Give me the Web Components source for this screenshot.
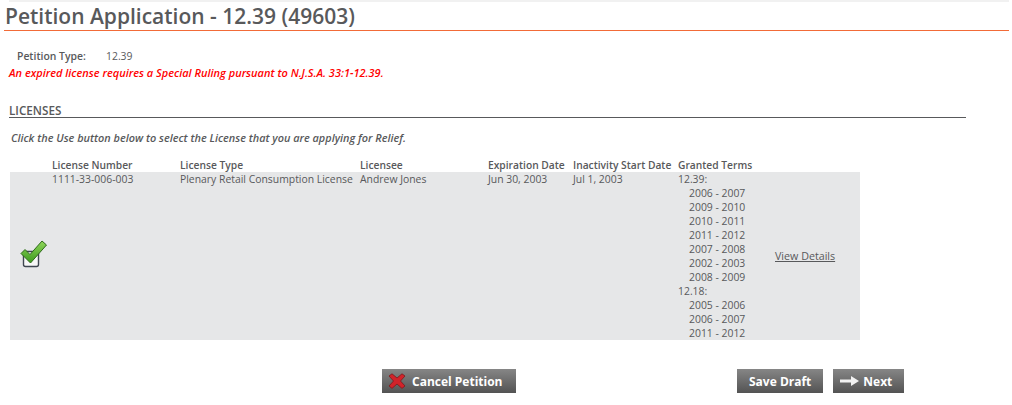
<!DOCTYPE html>
<html>
<head>
<meta charset="utf-8">
<title>Petition Application</title>
<style>
  html, body { margin: 0; padding: 0; background: #fff; }
  body { font-family: "Open Sans", "Noto Sans", sans-serif; color: #58595b; }
</style>
</head>
<body>
<petition-page>
  <page-title>Petition Application - 12.39 (49603)</page-title>
  <petition-info type="12.39">An expired license requires a Special Ruling pursuant to N.J.S.A. 33:1-12.39.</petition-info>
  <license-section heading="LICENSES" hint="Click the Use button below to select the License that you are applying for Relief."></license-section>
  <action-bar>
    <action-button slot="left" icon="cross">Cancel Petition</action-button>
    <action-button slot="right">Save Draft</action-button>
    <action-button slot="right" icon="arrow">Next</action-button>
  </action-bar>
</petition-page>

<script>
class PetitionPage extends HTMLElement {
  constructor() {
    super();
    this.attachShadow({ mode: 'open' });
    this.shadowRoot.innerHTML = `
      <style>
        :host { display: block; width: 1012px; height: 405px; overflow: hidden; }
        .topline { height: 2px; margin: 0 3px 0 9px; background: #f1f1f1; }
      </style>
      <div class="topline"></div>
      <slot></slot>
    `;
  }
}

class PageTitle extends HTMLElement {
  constructor() {
    super();
    this.attachShadow({ mode: 'open' });
    this.shadowRoot.innerHTML = `
      <style>
        :host {
          display: block;
          margin: 0 3px 0 4px;
          height: 28px;
          border-bottom: 1px solid #f26b38;
        }
        h1 {
          margin: 0;
          padding-left: 1px;
          font-size: 21px;
          line-height: 29px;
          font-weight: 600;
          color: #58595b;
        }
      </style>
      <h1><slot></slot></h1>
    `;
  }
}

class PetitionInfo extends HTMLElement {
  constructor() {
    super();
    this.attachShadow({ mode: 'open' });
    this.shadowRoot.innerHTML = `
      <style>
        :host { display: block; padding: 18px 0 0 9px; font-size: 10.4px; line-height: 14px; }
        .type { display: flex; padding-left: 8px; }
        b { width: 89px; font-weight: 600; }
        .warn { margin-top: 3px; font-size: 11px; color: #f00; font-weight: 600; font-style: italic; }
      </style>
      <div class="type"><b>Petition Type:</b><span></span></div>
      <div class="warn"><slot></slot></div>
    `;
  }
  connectedCallback() {
    this.shadowRoot.querySelector('span').textContent = this.getAttribute('type');
  }
}

class LicenseSection extends HTMLElement {
  constructor() {
    super();
    this.attachShadow({ mode: 'open' });
  }
  connectedCallback() {
    const terms = [
      ['12.39:', ['2006 - 2007', '2009 - 2010', '2010 - 2011', '2011 - 2012', '2007 - 2008', '2002 - 2003', '2008 - 2009']],
      ['12.18:', ['2005 - 2006', '2006 - 2007', '2011 - 2012']]
    ];
    const termsHTML = terms.map(([name, years]) =>
      `<div>${name}</div>` + years.map(y => `<div class="yr">${y}</div>`).join('')
    ).join('');
    this.shadowRoot.innerHTML = `
      <style>
        :host { display: block; margin: 22px 0 0 9px; font-size: 10.4px; line-height: 14px; }
        h2 {
          margin: 0 46px 0 0;
          height: 15px;
          font-size: 11.7px;
          line-height: 16px;
          font-weight: 600;
          border-bottom: 1px solid #58595b;
        }
        .hint { margin: 13px 0 0 2px; height: 27px; font-size: 10.9px; font-weight: 600; font-style: italic; }
        .grid {
          display: grid;
          grid-template-columns: 42px 128px 180px 128px 85px 105px 97px 85px;
          width: 850px;
          margin-left: 1px;
        }
        .grid b { font-size: 10.25px; font-weight: 600; white-space: nowrap; }
        .row { background: #e6e7e8; height: 168px; white-space: nowrap; }
        .yr { padding-left: 11px; }
        .check { display: flex; align-items: center; padding-left: 9px; padding-bottom: 4px; box-sizing: border-box; }
        .link { display: flex; align-items: center; font-size: 10.7px; }
        a { color: #58595b; text-decoration: underline; }
      </style>
      <h2>${this.getAttribute('heading')}</h2>
      <div class="hint">${this.getAttribute('hint')}</div>
      <div class="grid">
        <b></b><b>License Number</b><b>License Type</b><b>Licensee</b><b>Expiration Date</b><b>Inactivity Start Date</b><b>Granted Terms</b><b></b>
        <div class="row check">
          <svg width="28" height="28" viewBox="0 0 28 28">
            <defs>
              <linearGradient id="g" x1="0" y1="0" x2="0" y2="1">
                <stop offset="0" stop-color="#8fd65a"/><stop offset="1" stop-color="#3c9a1e"/>
              </linearGradient>
            </defs>
            <rect x="4.5" y="11.5" width="15" height="15" rx="2" fill="#f7f7f7" stroke="#3f4650" stroke-width="1.4"/>
            <path d="M2 13.5 L6 9.5 L11 14.5 L23 1 L27.5 5 L11.5 23 Z" fill="url(#g)" stroke="#2f6b1b" stroke-width="1" stroke-linejoin="round"/>
          </svg>
        </div>
        <div class="row">1111-33-006-003</div>
        <div class="row">Plenary Retail Consumption License</div>
        <div class="row">Andrew Jones</div>
        <div class="row">Jun 30, 2003</div>
        <div class="row">Jul 1, 2003</div>
        <div class="row">${termsHTML}</div>
        <div class="row link"><a href="#">View Details</a></div>
      </div>
    `;
  }
}

class ActionBar extends HTMLElement {
  constructor() {
    super();
    this.attachShadow({ mode: 'open' });
    this.shadowRoot.innerHTML = `
      <style>
        :host { display: flex; margin: 29px 0 0 382px; }
        .left { display: flex; width: 355px; }
        .right { display: flex; gap: 10px; }
      </style>
      <div class="left"><slot name="left"></slot></div>
      <div class="right"><slot name="right"></slot></div>
    `;
  }
}

const BUTTON_ICONS = {
  cross: `<svg width="18" height="16" viewBox="0 0 18 16">
    <path d="M1 3 L4 0.8 L9 5 L14 0.8 L17 3 L12.5 8 L17 13 L14 15.4 L9 11 L4 15.4 L1 13 L5.5 8 Z" fill="#d2232a" stroke="#7c1a1d" stroke-width="0.8" stroke-linejoin="round"/>
  </svg>`,
  arrow: `<svg width="19" height="12" viewBox="0 0 19 12">
    <path d="M0 4.5 H11 V1 L19 6 L11 11 V7.5 H0 Z" fill="#f2f2f2"/>
  </svg>`
};

class ActionButton extends HTMLElement {
  constructor() {
    super();
    this.attachShadow({ mode: 'open' });
  }
  connectedCallback() {
    const icon = BUTTON_ICONS[this.getAttribute('icon')] || '';
    this.shadowRoot.innerHTML = `
      <style>
        :host {
          display: inline-flex;
          align-items: center;
          height: 24px;
          padding: 0 12px;
          gap: 4px;
          font-size: 12px;
          font-weight: 700;
          color: #fff;
          background: linear-gradient(#868686, #535353);
          white-space: nowrap;
        }
        :host([icon="cross"]) { padding: 0 13px 0 6px; gap: 6px; }
        :host([icon="arrow"]) { padding-left: 7px; }
        svg { display: block; }
      </style>
      ${icon}<slot></slot>
    `;
  }
}

customElements.define('petition-page', PetitionPage);
customElements.define('page-title', PageTitle);
customElements.define('petition-info', PetitionInfo);
customElements.define('license-section', LicenseSection);
customElements.define('action-bar', ActionBar);
customElements.define('action-button', ActionButton);
</script>
</body>
</html>
